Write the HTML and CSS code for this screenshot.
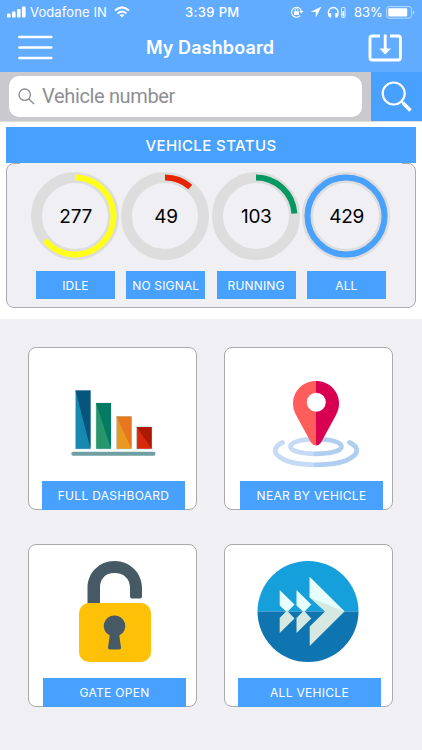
FILE: index.html
```html
<!DOCTYPE html>
<html lang="en">
<head>
<meta charset="utf-8">
<title>My Dashboard</title>
<link rel="stylesheet" href="styles.css">
</head>
<body>
<header class="header">
  <div class="status">
    <svg class="signal" width="19" height="12" viewBox="0 0 19 12" fill="#fff"><rect x="0" y="7.5" width="3.6" height="4" rx="1"/><rect x="5" y="5.5" width="3.6" height="6" rx="1"/><rect x="10" y="3" width="3.6" height="8.5" rx="1"/><rect x="15" y="0.5" width="3.6" height="11" rx="1"/></svg>
    <span class="carrier">Vodafone IN</span>
    <svg class="wifi" width="16" height="12" viewBox="0 0 16 12" fill="none" stroke="#fff" stroke-width="2"><path d="M1 4.6Q8-1.8 15 4.6M3.6 7.4Q8 3.6 12.4 7.4"/><path d="M8 11.5 5.6 9.1Q8 7.2 10.4 9.1Z" fill="#fff" stroke="none"/></svg>
    <span class="time">3:39 PM</span>
    <svg class="indicators" width="58" height="16" viewBox="0 0 58 16" fill="none" stroke="#fff"><path d="M10.2 11.6A5 5 0 1 1 11.4 7.2" stroke-width="1.1"/><path d="m9.3 7 2.1 2.4L13.4 7Z" fill="#fff" stroke="none"/><rect x="4" y="7.2" width="5" height="3.7" rx=".5" fill="#fff" stroke="none"/><path d="M5 7V6a1.5 1.5 0 0 1 3 0v1" stroke-width=".9"/><path d="m31.500 2.500-11 5.500h5.300v5.500Z" fill="#fff" stroke="none"/><path d="M39.200 12.500C34.500 .5 52 .5 47.300 12.500" stroke-width="1.300"/><path d="M40.200 9v4.500M46.300 9v4.500" stroke-width="2"/><rect x="51.500" y="3.500" width="3.500" height="10" rx="1" stroke-width=".8"/><rect x="52.500" y="7" width="1.600" height="5.500" fill="#fff" stroke="none"/></svg>
    <span class="percent">83%</span>
    <svg class="battery" width="29" height="13" viewBox="0 0 29 13"><rect x=".6" y=".6" width="25" height="11.600" rx="2.600" fill="none" stroke="#b8dbff"/><rect x="2.200" y="2.200" width="19" height="8.400" rx="1" fill="#fff"/><path d="M27 4.300q2.600 2.100 0 4.200Z" fill="#b8dbff"/></svg>
  </div>
  <div class="nav">
    <svg class="menu" width="35" height="26" viewBox="0 0 35 26" stroke="#fff" stroke-width="2.700" stroke-linecap="round"><path d="M1.400 2h31.800M1.400 12.500h31.800M1.400 23h31.800"/></svg>
    <h1 class="title">My Dashboard</h1>
    <svg class="download" width="34" height="29" viewBox="0 0 34 29" fill="none" stroke="#fff" stroke-width="2.900"><path d="M12 2H4.200Q2 2 2 4.200v19.600q0 2.200 2.200 2.200h26q2.200 0 2.200-2.200V4.200Q32.400 2 30.200 2H22M17.200 .5v15"/><path d="M11.400 14.500H23l-5.800 6Z" fill="#fff" stroke="none"/></svg>
  </div>
</header>
<div class="search">
  <div class="field">
    <svg width="17" height="17" viewBox="0 0 17 17" fill="none" stroke="#8e8e93" stroke-width="1.400"><circle cx="6.700" cy="6.700" r="5.700"/><path d="m10.900 10.900 5.100 5"/></svg>
    <span class="placeholder">Vehicle number</span>
  </div>
  <div class="go">
    <svg width="32" height="32" viewBox="0 0 32 32" fill="none" stroke="#fff"><circle cx="12.700" cy="12.500" r="11" stroke-width="2.200"/><path d="m20.500 20.500 2 2" stroke-width="2"/><path d="m22.200 22.200 7.300 7.300" stroke-width="3.600"/></svg>
  </div>
</div>
<section class="panel">
  <h2 class="panel-title"><span>VEHICLE STATUS</span></h2>
  <div class="gauges">
    <div class="gauge"><div class="ring"><svg width="88" height="88" viewBox="0 0 88 88"><circle class="track" cx="44" cy="44" r="38.500"/><path d="M44 5.500A38.500 38.500 0 1 1 14 68.200" stroke="#ffff1a"/></svg><span>277</span></div><div class="tag">IDLE</div></div>
    <div class="gauge"><div class="ring"><svg width="88" height="88" viewBox="0 0 88 88"><circle class="track" cx="44" cy="44" r="38.500"/><path d="M44 5.500A38.500 38.500 0 0 1 69.300 15" stroke="#e62400"/></svg><span>49</span></div><div class="tag">NO SIGNAL</div></div>
    <div class="gauge"><div class="ring"><svg width="88" height="88" viewBox="0 0 88 88"><circle class="track" cx="44" cy="44" r="38.500"/><path d="M44 5.500A38.500 38.500 0 0 1 82.400 41.500" stroke="#059862"/></svg><span>103</span></div><div class="tag">RUNNING</div></div>
    <div class="gauge"><div class="ring"><svg width="88" height="88" viewBox="0 0 88 88"><circle class="track" cx="44" cy="44" r="38.500"/><circle cx="44" cy="44" r="38.500" stroke="#48a1ff"/></svg><span>429</span></div><div class="tag">ALL</div></div>
  </div>
</section>
<main class="cards">
  <article class="card">
    <svg width="168" height="133" viewBox="0 0 168 133"><g stroke="#a5cbd0" stroke-width=".5"><path d="M46.500 42.500h15v58.500h-15Z" fill="#1789b1"/><path d="M67 55h15v46H67Z" fill="#27966a"/><path d="M87.500 68.500h15V101h-15Z" fill="#eb9822"/><path d="M107.700 79h15v22h-15Z" fill="#d9290d"/></g><path d="M46.500 42.500h15V101Z" fill="#07557d"/><path d="M67 55h15v46Z" fill="#057a62"/><path d="M87.500 68.500h15V101Z" fill="#e6771e"/><path d="M107.700 79h15v22Z" fill="#ad1905"/><path d="M44.300 105.700h80.200" stroke="#6f9ea3" stroke-width="4" stroke-linecap="round"/></svg>
    <div class="label">FULL DASHBOARD</div>
  </article>
  <article class="card">
    <svg width="168" height="133" viewBox="0 0 168 133" fill="none"><g stroke-width="4.800" stroke-linecap="round"><path d="M91 91.200c-15 0-25.500 3-25.500 7.300s11 7.300 25.500 7.300M57.500 94.500C41 102 53 116.800 91 116.800" stroke="#c4daf5"/><path d="M91 91.200c15 0 25.500 3 25.500 7.300S106 105.800 91 105.800M124.500 94.500C141 102 129 116.800 91 116.800" stroke="#b0cff0"/></g><path d="M91 33c-13 0-23 10-23 22.500 0 4 1 7.500 3 11.500l15 27.500Q88 97.500 91 97.500Z" fill="#ff5c5c"/><path d="M91 33c13 0 23 10 23 22.500 0 4-1 7.500-3 11.500L96 94.500Q94 97.500 91 97.500Z" fill="#d90052"/><circle cx="91.300" cy="54.300" r="9.500" fill="#fff"/></svg>
    <div class="label label-near">NEAR BY VEHICLE</div>
  </article>
  <article class="card">
    <svg width="168" height="133" viewBox="0 0 168 133"><path d="M58.500 60V43C58.500 28 70 16 85.500 16s27.500 12 27.500 27v8.500q0 2-2 2h-8q-2 0-2-2V43c0-9-6-15-15.500-15S71 34 71 43v17Z" fill="#455a64"/><rect x="50" y="58" width="72" height="59" rx="10" fill="#ffc107"/><path d="M85.500 70.500a10.500 10.500 0 0 0-4.800 20l-1.700 12q-.3 2 2 2h9q2.300 0 2-2l-1.700-12a10.500 10.500 0 0 0-4.800-20Z" fill="#455a64"/></svg>
    <div class="label label-gate">GATE OPEN</div>
  </article>
  <article class="card">
    <svg width="168" height="133" viewBox="0 0 168 133"><path d="M32.500 66.500a50.500 50.500 0 0 1 101 0Z" fill="#15a0dc"/><path d="M32.500 66.500a50.500 50.500 0 0 0 101 0Z" fill="#0e75b0"/><path d="m54.700 45 14.800 14.500-6.600 7H61l-6.300-6ZM71.500 45l14.800 14.500-6.600 7h-1.900l-6.300-6Z" fill="#e6ffff"/><path d="M61 66.500h1.900l6.600 7L54.700 88V73ZM77.800 66.500h1.900l6.600 7L71.500 88V73Z" fill="#d5e8e2"/><path d="m84.700 32 34.800 34.500L84.700 101V81.500l15.300-15-15.300-14Z" fill="#d5e8e2"/><path d="m84.700 32 34.800 34.500-34.800-14Z" fill="#e6ffff"/></svg>
    <div class="label">ALL VEHICLE</div>
  </article>
</main>
</body>
</html>
```
FILE: styles.css
```css
* { box-sizing: border-box; }
body { margin: 0; width: 422px; height: 750px; overflow: hidden; background: #efeff4; font-family: Inter, sans-serif; }
svg { display: block; flex: none; }
h1, h2 { margin: 0; }
.header { height: 72px; background: #62acff; color: #fff; }
.status { height: 24px; display: flex; align-items: center; padding-left: 7px; white-space: nowrap; font-size: 13px; line-height: 24px; }
.signal { margin-right: 4px; }
.carrier { width: 84px; letter-spacing: .1px; }
.wifi { margin-right: 55px; }
.time { width: 105px; font-weight: 500; letter-spacing: .35px; }
.indicators { margin-right: 6px; }
.percent { width: 31px; }
.battery { margin-left: 1px; }
.nav { height: 48px; display: flex; align-items: center; justify-content: space-between; padding: 0 20px 0 18px; }
.title { font-size: 18px; font-weight: 600; line-height: 24px; margin-right: 1px; letter-spacing: .12px; }
.search { height: 49px; display: flex; background: #c9c9ce; justify-content: space-between; padding-left: 9px; }
.field { width: 353px; height: 41px; margin-top: 4px; border-radius: 10px; background: #fff; display: flex; align-items: center; padding-left: 9px; }
.placeholder { margin: -2px 0 0 7px; font-family: Roboto, sans-serif; font-size: 20px; letter-spacing: -.35px; color: #8e8e93; }
.go { width: 51px; background: #48a1ff; display: flex; align-items: center; justify-content: center; }
.panel { height: 198px; background: #fff; padding: 5px 6px 0; border-top: 1px solid #dedee0; }
.panel-title { height: 36px; background: #48a1ff; color: #fff; font-size: 15px; font-weight: 500; line-height: 37px; text-align: center; letter-spacing: .4px; }
.gauges { position: relative; height: 145px; display: flex; gap: 2px; padding: 8px 0 0 24px; background: #efeff4; border: 1px solid #aaaab2; border-radius: 8px; }
.gauges::before { content: ""; position: absolute; top: -1px; left: 13px; right: 13px; height: 1px; background: #efeff4; }
.gauge { width: 88.300px; }
.ring { display: grid; place-items: center; height: 88px; }
.ring > * { grid-area: 1 / 1; }
.ring span { font-size: 19px; line-height: 24px; letter-spacing: -.3px; padding: 1px 0 0 1px; }
.ring circle, .ring path { fill: none; stroke-width: 6; }
.ring .track { stroke: #ddd; stroke-width: 11; }
.tag { width: 79px; height: 28px; margin: 11px 0 0 5px; background: #48a1ff; color: #fff; text-align: center; font-size: 12px; line-height: 29px; letter-spacing: .15px; white-space: nowrap; }
.cards { display: grid; grid-template-columns: 169px 169px; gap: 34px 27px; padding: 28px 28px 0; }
.card { height: 163px; background: #fff; border: 1px solid #aaa; border-radius: 8px; }
.label { width: 143px; height: 29px; margin-left: 13px; background: #48a1ff; color: #fff; text-align: center; font-size: 12px; line-height: 30px; letter-spacing: .3px; white-space: nowrap; }
.label-near { margin-left: 15px; }
.label-gate { margin-left: 14px; }
```
